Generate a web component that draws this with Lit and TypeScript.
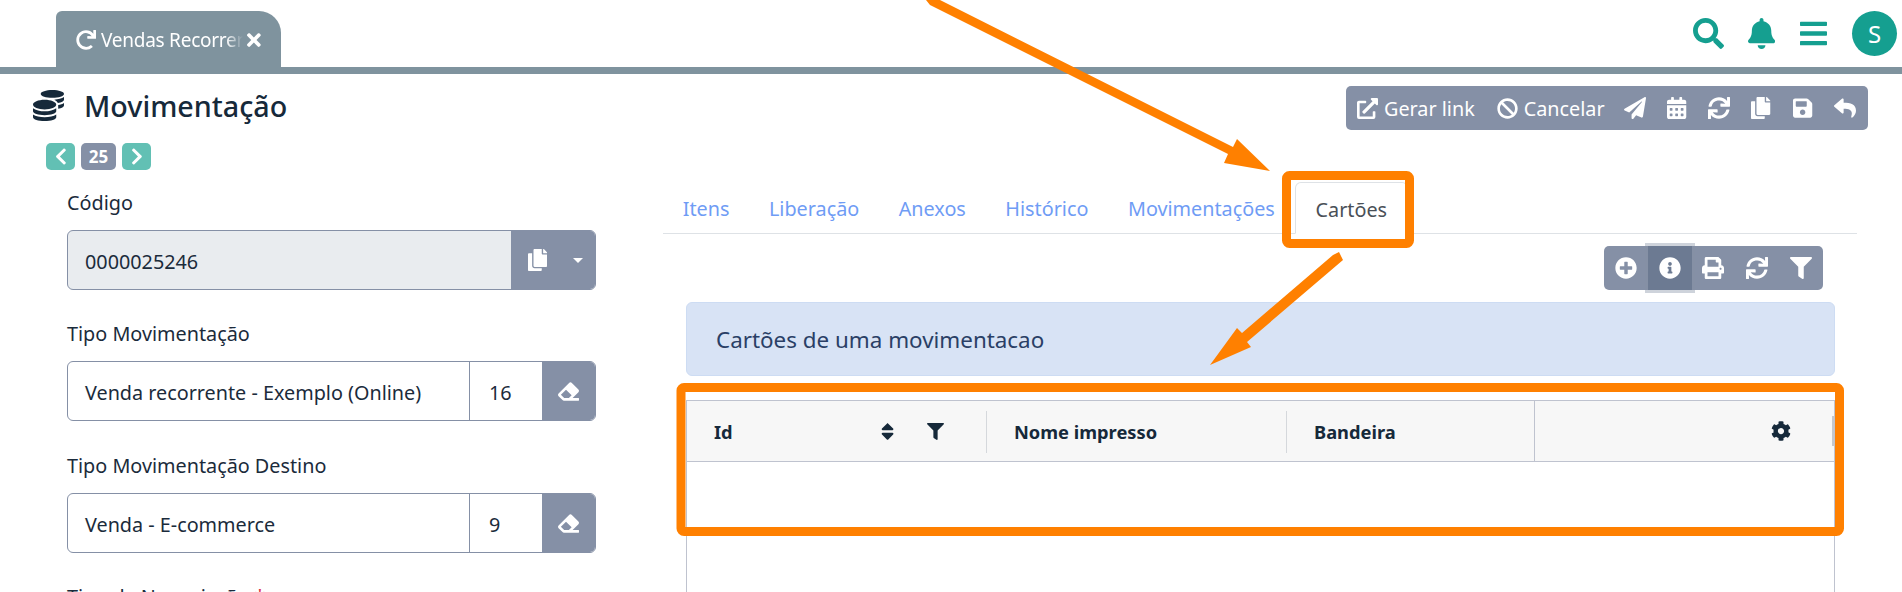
import { LitElement, html, css } from 'lit';
import { customElement } from 'lit/decorators.js';

// font awesome 5 solid paths, [viewBox width, d]
const ICONS: Record<string, [number, string]> = {
  search: [512, 'M505 442.7L405.3 343c-4.5-4.5-10.6-7-17-7H372c27.6-35.3 44-79.7 44-128C416 93.1 322.9 0 208 0S0 93.1 0 208s93.1 208 208 208c48.3 0 92.7-16.4 128-44v16.3c0 6.4 2.5 12.5 7 17l99.7 99.7c9.4 9.4 24.6 9.4 33.9 0l28.3-28.3c9.4-9.4 9.4-24.6.1-34zM208 336c-70.7 0-128-57.2-128-128 0-70.7 57.2-128 128-128 70.7 0 128 57.2 128 128 0 70.7-57.2 128-128 128z'],
  bell: [448, 'M224 512c35.32 0 63.97-28.65 63.97-64H160.03c0 35.35 28.65 64 63.97 64zm215.39-149.71c-19.32-20.76-55.47-51.99-55.47-154.29 0-77.7-54.48-139.9-127.94-155.16V32c0-17.67-14.32-32-31.98-32s-31.98 14.33-31.98 32v20.84C118.56 68.1 64.08 130.3 64.08 208c0 102.3-36.15 133.53-55.47 154.29-6 6.45-8.66 14.16-8.61 21.71.11 16.4 12.98 32 32.1 32h383.8c19.12 0 32-15.6 32.1-32 .05-7.55-2.61-15.27-8.61-21.71z'],
  bars: [448, 'M16 132h416c8.837 0 16-7.163 16-16V76c0-8.837-7.163-16-16-16H16C7.163 60 0 67.163 0 76v40c0 8.837 7.163 16 16 16zm0 160h416c8.837 0 16-7.163 16-16v-40c0-8.837-7.163-16-16-16H16c-8.837 0-16 7.163-16 16v40c0 8.837 7.163 16 16 16zm0 160h416c8.837 0 16-7.163 16-16v-40c0-8.837-7.163-16-16-16H16c-8.837 0-16 7.163-16 16v40c0 8.837 7.163 16 16 16z'],
  times: [352, 'M242.72 256l100.07-100.07c12.28-12.28 12.28-32.19 0-44.48l-22.24-22.24c-12.28-12.28-32.19-12.28-44.48 0L176 189.28 75.93 89.21c-12.28-12.28-32.19-12.28-44.48 0L9.21 111.45c-12.28 12.28-12.28 32.19 0 44.48L109.28 256 9.21 356.07c-12.28 12.28-12.28 32.19 0 44.48l22.24 22.24c12.28 12.28 32.2 12.28 44.48 0L176 322.72l100.07 100.07c12.28 12.28 32.2 12.28 44.48 0l22.24-22.24c12.28-12.28 12.28-32.19 0-44.48L242.72 256z'],
  redo: [512, 'M500.33 0h-47.41a12 12 0 0 0-12 12.57l4 82.76A247.42 247.42 0 0 0 256 8C119.34 8 7.9 119.53 8 256.19 8.1 393.07 119.1 504 256 504a247.1 247.1 0 0 0 166.18-63.91 12 12 0 0 0 .48-17.43l-34-34a12 12 0 0 0-16.38-.55A176 176 0 1 1 402.1 157.8l-101.53-4.87a12 12 0 0 0-12.57 12v47.41a12 12 0 0 0 12 12h200.33a12 12 0 0 0 12-12V12a12 12 0 0 0-12-12z'],
  sync: [512, 'M440.65 12.57l4 82.77A247.16 247.16 0 0 0 255.83 8C134.73 8 33.91 94.92 12.29 209.82A12 12 0 0 0 24.09 224h49.05a12 12 0 0 0 11.67-9.26 175.91 175.91 0 0 1 317-56.94l-101.46-4.86a12 12 0 0 0-12.57 12v47.41a12 12 0 0 0 12 12H500a12 12 0 0 0 12-12V12a12 12 0 0 0-12-12h-47.37a12 12 0 0 0-11.98 12.57zM255.83 432a175.61 175.61 0 0 1-146-77.8l101.8 4.87a12 12 0 0 0 12.57-12v-47.4a12 12 0 0 0-12-12H12a12 12 0 0 0-12 12V500a12 12 0 0 0 12 12h47.35a12 12 0 0 0 12-12.6l-4.15-82.57A247.17 247.17 0 0 0 255.83 504c121.11 0 221.93-86.92 243.55-201.82a12 12 0 0 0-11.8-14.18h-49.05a12 12 0 0 0-11.67 9.26A175.86 175.86 0 0 1 255.83 432z'],
  filter: [512, 'M487.976 0H24.028C2.71 0-8.047 25.866 7.058 40.971L192 225.941V432c0 7.831 3.821 15.17 10.237 19.662l80 55.98C298.02 518.69 320 507.493 320 487.98V225.941l184.947-184.97C520.021 25.896 509.338 0 487.976 0z'],
  plus: [512, 'M256 8C119 8 8 119 8 256s111 248 248 248 248-111 248-248S393 8 256 8zm144 276c0 6.6-5.4 12-12 12h-92v92c0 6.6-5.4 12-12 12h-56c-6.6 0-12-5.4-12-12v-92h-92c-6.6 0-12-5.4-12-12v-56c0-6.6 5.4-12 12-12h92v-92c0-6.6 5.4-12 12-12h56c6.6 0 12 5.4 12 12v92h92c6.6 0 12 5.4 12 12v56z'],
  info: [512, 'M256 8C119.043 8 8 119.083 8 256c0 136.997 111.043 248 248 248s248-111.003 248-248C504 119.083 392.957 8 256 8zm0 110c23.196 0 42 18.804 42 42s-18.804 42-42 42-42-18.804-42-42 18.804-42 42-42zm56 254c0 6.627-5.373 12-12 12h-88c-6.627 0-12-5.373-12-12v-24c0-6.627 5.373-12 12-12h12v-64h-12c-6.627 0-12-5.373-12-12v-24c0-6.627 5.373-12 12-12h64c6.627 0 12 5.373 12 12v100h12c6.627 0 12 5.373 12 12v24z'],
  print: [512, 'M448 192V77.25c0-8.49-3.37-16.62-9.37-22.63L393.37 9.37c-6-6-14.14-9.37-22.63-9.37H96C78.33 0 64 14.33 64 32v160c-35.35 0-64 28.65-64 64v112c0 8.84 7.16 16 16 16h48v96c0 17.67 14.33 32 32 32h320c17.67 0 32-14.33 32-32v-96h48c8.84 0 16-7.16 16-16V256c0-35.35-28.65-64-64-64zm-64 256H128v-96h256v96zm0-224H128V64h192v48c0 8.84 7.16 16 16 16h48v96zm48 72c-13.25 0-24-10.75-24-24 0-13.26 10.75-24 24-24s24 10.74 24 24c0 13.25-10.75 24-24 24z'],
  plane: [512, 'M476 3.2L12.5 270.6c-18.1 10.4-15.8 35.6 2.2 43.2L121 358.4l287.3-253.2c5.5-4.9 13.3 2.6 8.6 8.3L176 407v80.5c0 23.6 28.5 32.9 42.5 15.8L282 426l124.6 52.2c14.2 6 30.4-2.9 33-18.2l72-432C515 7.8 493.3-6.8 476 3.2z'],
  calendar: [448, 'M0 464c0 26.5 21.5 48 48 48h352c26.5 0 48-21.5 48-48V192H0v272zm320-196c0-6.6 5.4-12 12-12h40c6.6 0 12 5.4 12 12v40c0 6.6-5.4 12-12 12h-40c-6.6 0-12-5.4-12-12v-40zm0 128c0-6.6 5.4-12 12-12h40c6.6 0 12 5.4 12 12v40c0 6.6-5.4 12-12 12h-40c-6.6 0-12-5.4-12-12v-40zM192 268c0-6.6 5.4-12 12-12h40c6.6 0 12 5.4 12 12v40c0 6.6-5.4 12-12 12h-40c-6.6 0-12-5.4-12-12v-40zm0 128c0-6.6 5.4-12 12-12h40c6.6 0 12 5.4 12 12v40c0 6.6-5.4 12-12 12h-40c-6.6 0-12-5.4-12-12v-40zM64 268c0-6.6 5.4-12 12-12h40c6.6 0 12 5.4 12 12v40c0 6.6-5.4 12-12 12H76c-6.6 0-12-5.4-12-12v-40zm0 128c0-6.6 5.4-12 12-12h40c6.6 0 12 5.4 12 12v40c0 6.6-5.4 12-12 12H76c-6.6 0-12-5.4-12-12v-40zM400 64h-48V16c0-8.8-7.2-16-16-16h-32c-8.8 0-16 7.2-16 16v48H160V16c0-8.8-7.2-16-16-16h-32c-8.8 0-16 7.2-16 16v48H48C21.5 64 0 85.5 0 112v48h448v-48c0-26.5-21.5-48-48-48z'],
  copy: [448, 'M320 448v40c0 13.255-10.745 24-24 24H24c-13.255 0-24-10.745-24-24V120c0-13.255 10.745-24 24-24h72v296c0 30.879 25.121 56 56 56h168zm0-344V0H152c-13.255 0-24 10.745-24 24v368c0 13.255 10.745 24 24 24h272c13.255 0 24-10.745 24-24V128H344c-13.2 0-24-10.8-24-24zm120.971-31.029L375.029 7.029A24 24 0 0 0 358.059 0H352v96h96v-6.059a24 24 0 0 0-7.029-16.97z'],
  save: [448, 'M433.941 129.941l-83.882-83.882A48 48 0 0 0 316.118 32H48C21.49 32 0 53.49 0 80v352c0 26.51 21.49 48 48 48h352c26.51 0 48-21.49 48-48V163.882a48 48 0 0 0-14.059-33.941zM224 416c-35.346 0-64-28.654-64-64 0-35.346 28.654-64 64-64s64 28.654 64 64c0 35.346-28.654 64-64 64zm96-304.52V212c0 6.627-5.373 12-12 12H76c-6.627 0-12-5.373-12-12V108c0-6.627 5.373-12 12-12h228.52c3.183 0 6.235 1.264 8.485 3.515l3.48 3.48A11.996 11.996 0 0 1 320 111.48z'],
  reply: [512, 'M8.309 189.836L184.313 37.851C199.719 24.546 224 35.347 224 56.015v80.053c160.629 1.839 288 34.032 288 186.258 0 61.441-39.581 122.309-83.333 154.132-13.653 9.931-33.111-2.533-28.077-18.631 45.344-145.012-21.507-183.51-176.59-185.742V360c0 20.7-24.3 31.453-39.687 18.164l-176.004-152c-11.071-9.562-11.086-26.753 0-36.328z'],
  ban: [512, 'M256 8C119.034 8 8 119.033 8 256s111.034 248 248 248 248-111.034 248-248S392.967 8 256 8zm130.108 117.892c65.448 65.448 70 165.481 20.677 235.637L150.47 105.216c70.204-49.356 170.226-44.735 235.638 20.676zM125.892 386.108c-65.448-65.448-70-165.481-20.677-235.637L361.53 406.784c-70.203 49.356-170.226 44.736-235.638-20.676z'],
  link: [512, 'M432 320h-32a16 16 0 0 0-16 16v112H64V128h144a16 16 0 0 0 16-16V80a16 16 0 0 0-16-16H48a48 48 0 0 0-48 48v352a48 48 0 0 0 48 48h352a48 48 0 0 0 48-48V336a16 16 0 0 0-16-16zM488 0H360c-21.37 0-32.05 25.91-17 41l35.73 35.73L135 320.37a24 24 0 0 0 0 34L157.67 377a24 24 0 0 0 34 0l243.61-243.68L471 169c15 15 41 4.5 41-17V24a24 24 0 0 0-24-24z'],
  eraser: [512, 'M497.941 273.941c18.745-18.745 18.745-49.137 0-67.882l-160-160c-18.745-18.745-49.136-18.746-67.883 0l-256 256c-18.745 18.745-18.745 49.137 0 67.882l96 96A48.004 48.004 0 0 0 144 480h356c6.627 0 12-5.373 12-12v-40c0-6.627-5.373-12-12-12H355.883l142.058-142.059zm-302.627-62.627l137.372 137.372L265.373 416H150.628l-80-80 124.686-124.686z'],
  cog: [512, 'M487.4 315.7l-42.6-24.6c4.3-23.2 4.3-47 0-70.2l42.6-24.6c4.9-2.8 7.1-8.6 5.5-14-11.1-35.6-30-67.8-54.7-94.6-3.8-4.1-10-5.1-14.8-2.3L380.8 110c-17.9-15.4-38.5-27.3-60.8-35.1V25.8c0-5.6-3.9-10.5-9.4-11.7-36.7-8.2-74.3-7.8-109.2 0-5.5 1.2-9.4 6.1-9.4 11.7V75c-22.2 7.9-42.8 19.8-60.8 35.1L88.7 85.5c-4.9-2.8-11-1.9-14.8 2.3-24.7 26.7-43.6 58.9-54.7 94.6-1.7 5.4.6 11.2 5.5 14L67.3 221c-4.3 23.2-4.3 47 0 70.2l-42.6 24.6c-4.9 2.8-7.1 8.6-5.5 14 11.1 35.6 30 67.8 54.7 94.6 3.8 4.1 10 5.1 14.8 2.3l42.6-24.6c17.9 15.4 38.5 27.3 60.8 35.1v49.2c0 5.6 3.9 10.5 9.4 11.7 36.7 8.2 74.3 7.8 109.2 0 5.5-1.2 9.4-6.1 9.4-11.7v-49.2c22.2-7.9 42.8-19.8 60.8-35.1l42.6 24.6c4.9 2.8 11 1.9 14.8-2.3 24.7-26.7 43.6-58.9 54.7-94.6 1.5-5.5-.7-11.3-5.6-14.1zM256 336c-44.1 0-80-35.9-80-80s35.9-80 80-80 80 35.9 80 80-35.9 80-80 80z'],
  coins: [512, 'M0 405.3V448c0 35.3 86 64 192 64s192-28.7 192-64v-42.7C342.7 434.4 267.2 448 192 448S41.3 434.4 0 405.3zM320 128c106 0 192-28.7 192-64S426 0 320 0 128 28.7 128 64s86 64 192 64zM0 300.4V352c0 35.3 86 64 192 64s192-28.7 192-64v-51.6c-41.3 34-116.9 51.6-192 51.6S41.3 334.4 0 300.4zm416 11c57.3-11.1 96-31.7 96-55.4v-42.7c-23.2 16.4-57.3 27.6-96 34.5v63.6zM192 160C86 160 0 195.8 0 240s86 80 192 80 192-35.8 192-80-86-80-192-80zm219.3 56.3c60-10.8 100.7-32 100.7-56.3v-42.7c-35.5 25.1-96.5 38.6-160.7 41.8 29.5 14.3 51.2 33.5 60 57.2z'],
  left: [320, 'M34.52 239.03L228.87 44.69c9.37-9.37 24.57-9.37 33.94 0l22.67 22.67c9.36 9.36 9.37 24.52.04 33.9L131.49 256l154.02 154.75c9.34 9.38 9.32 24.54-.04 33.9l-22.67 22.67c-9.37 9.37-24.57 9.37-33.94 0L34.52 272.97c-9.37-9.37-9.37-24.57 0-33.94z'],
  right: [320, 'M285.476 272.971L91.132 467.314c-9.373 9.373-24.569 9.373-33.941 0l-22.667-22.667c-9.357-9.357-9.375-24.522-.04-33.901L188.505 256 34.484 101.255c-9.335-9.379-9.317-24.544.04-33.901l22.667-22.667c9.373-9.373 24.569-9.373 33.941 0L285.475 239.03c9.373 9.372 9.373 24.568.001 33.941z'],
  sort: [320, 'M41 288h238c21.4 0 32.1 25.9 17 41L177 448c-9.4 9.4-24.6 9.4-33.9 0L24 329c-15.1-15.1-4.4-41 17-41zm255-105L177 64c-9.4-9.4-24.6-9.4-33.9 0L24 183c-15.1 15.1-4.4 41 17 41h238c21.4 0 32.1-25.9 17-41z'],
};

const icon = (name: string, size: number) => {
  const [w, d] = ICONS[name];
  return html`<svg class="ic" style="height:${size}px;width:${(size * w) / 512}px" viewBox="0 0 ${w} 512" fill="currentColor"><path d=${d}></path></svg>`;
};

@customElement('app-root')
export class AppRoot extends LitElement {
  static styles = css`
    :host {
      display: block;
      position: relative;
      width: 1902px;
      height: 592px;
      overflow: hidden;
      background: #fff;
      font-family: 'Noto Sans', sans-serif;
      font-size: 19.8px;
      color: #1b2b3b;
    }
    .ic {
      display: block;
      flex: none;
    }
    .topbar {
      display: flex;
      justify-content: space-between;
      height: 67px;
      padding: 0 5px 0 56px;
      border-bottom: 7px solid #7f939e;
    }
    .doc-tab {
      display: flex;
      align-items: center;
      align-self: flex-end;
      width: 225px;
      height: 56px;
      padding: 2px 20px 0;
      box-sizing: border-box;
      background: #7f939e;
      color: #fff;
      border-radius: 6px 22px 0 0;
    }
    .doc-tab span {
      width: 142px;
      margin-left: 5px;
      overflow: hidden;
      white-space: nowrap;
      font-size: 19px;
      letter-spacing: -0.25px;
      -webkit-mask-image: linear-gradient(to right, #000 88%, transparent);
      mask-image: linear-gradient(to right, #000 88%, transparent);
    }
    .doc-tab .ic:last-child {
      margin-left: 4px;
    }
    .top-icons {
      display: flex;
      align-items: center;
      color: #159f90;
    }
    .bell {
      margin-left: 24px;
    }
    .bars,
    .avatar {
      margin-left: 25px;
    }
    .avatar {
      width: 45px;
      height: 45px;
      border-radius: 50%;
      background: #159f90;
      color: #fff;
      display: flex;
      align-items: center;
      justify-content: center;
      font-size: 24px;
    }
    .head {
      display: flex;
      justify-content: space-between;
      align-items: center;
      margin-top: 12px;
      padding: 0 34px 0 33px;
    }
    .title {
      display: flex;
      align-items: center;
      gap: 20px;
      margin: -5px 0 0;
      font-size: 28.7px;
      font-weight: 500;
      line-height: 36px;
      color: #16293a;
    }
    .toolbar {
      display: flex;
      align-items: center;
      background: #8590a6;
      color: #fff;
      border-radius: 5px;
    }
    .toolbar.main {
      width: 522px;
      height: 44px;
      padding: 0 2px 0 11px;
      box-sizing: border-box;
    }
    .toolbar.main b {
      font-weight: 400;
      margin-left: 6px;
      white-space: nowrap;
    }
    .toolbar.main b + .ic {
      margin-left: 22px;
    }
    .slots {
      display: flex;
      flex: none;
      margin-left: auto;
    }
    .slots div {
      display: flex;
      justify-content: center;
      width: 42px;
    }
    .pager {
      display: flex;
      align-items: center;
      gap: 6px;
      height: 28px;
      margin: 12px 0 0 46px;
    }
    .pager button {
      display: flex;
      align-items: center;
      justify-content: center;
      width: 29px;
      height: 27px;
      margin-top: 1px;
      padding: 0;
      border: 0;
      border-radius: 5px;
      background: #62c0b4;
      color: #fff;
    }
    .pager span {
      width: 35px;
      height: 27px;
      border-radius: 5px;
      background: #8590a6;
      color: #fff;
      font-size: 17px;
      font-weight: 700;
      line-height: 27px;
      text-align: center;
    }
    .body {
      display: flex;
      align-items: flex-start;
    }
    .form {
      width: 529px;
      margin-left: 67px;
      padding-top: 20px;
      flex: none;
    }
    .group {
      margin-bottom: 31px;
    }
    .group:nth-child(2) {
      margin-bottom: 32px;
    }
    label {
      display: block;
      line-height: 26px;
      margin-bottom: 14px;
    }
    label i {
      color: #dc3545;
      font-style: normal;
    }
    .field {
      display: flex;
      height: 60px;
      box-sizing: border-box;
      border: 1px solid #8590a6;
      border-radius: 6px;
      overflow: hidden;
      line-height: 61px;
    }
    .field.off {
      background: #e9ecef;
    }
    .val {
      flex: 1;
      padding-left: 17px;
      white-space: nowrap;
    }
    .num {
      width: 73px;
      padding-left: 19px;
      box-sizing: border-box;
      border-left: 1px solid #8590a6;
    }
    .btn {
      display: flex;
      align-items: center;
      justify-content: center;
      width: 53px;
      background: #8590a6;
      color: #fff;
    }
    .btn.copy {
      width: 84px;
      justify-content: flex-start;
      padding-left: 17px;
      box-sizing: border-box;
    }
    .caret {
      width: 0;
      height: 0;
      margin-left: 26px;
      border: 5px solid transparent;
      border-top-color: #fff;
      border-bottom-width: 0;
    }
    .detail {
      width: 1194px;
      margin: 12px 0 0 67px;
      flex: none;
    }
    .tabs {
      display: flex;
      height: 52px;
      box-sizing: border-box;
      border-bottom: 1px solid #dee2e6;
    }
    .tabs a {
      padding: 0 19.75px;
      line-height: 54px;
      color: #6f9cf5;
      white-space: nowrap;
    }
    .tabs a.on {
      padding: 0 20px;
      height: 52px;
      box-sizing: border-box;
      border: 1px solid #dee2e6;
      border-bottom-color: #fff;
      border-radius: 6px 6px 0 0;
      color: #495057;
    }
    .toolbar.sub {
      width: 219px;
      height: 44px;
      margin: 12px 34px 0 auto;
    }
    .toolbar.sub div {
      display: flex;
      align-items: center;
      justify-content: center;
      width: 43.8px;
      height: 44px;
    }
    .toolbar.sub div.on {
      background: #6c7a92;
      box-shadow: 0 0 0 3px rgba(133, 144, 166, 0.4);
    }
    .alert {
      display: flex;
      align-items: center;
      height: 74px;
      margin: 12px 22px 0 23px;
      padding: 1px 0 0 29px;
      box-sizing: border-box;
      border: 1px solid #cddcf3;
      border-radius: 6px;
      background: #d8e3f5;
      color: #2a3f66;
      font-size: 22.4px;
    }
    .table {
      height: 300px;
      margin: 24px 22px 0 23px;
      border: 1px solid #bfc3cf;
      border-bottom: 0;
    }
    .thead {
      display: grid;
      grid-template-columns: 300px 300px 248px 1fr;
      height: 60px;
      border-bottom: 1px solid #bfc3cf;
      background: #f7f7f7;
      font-weight: 700;
      font-size: 18.3px;
    }
    .th {
      display: flex;
      align-items: center;
      position: relative;
      padding-left: 27px;
      color: #16293a;
    }
    .th.sep::after {
      content: '';
      position: absolute;
      right: 0;
      top: 10px;
      bottom: 8px;
      width: 1px;
      background: #d5d8dc;
    }
    .th.full {
      border-right: 1px solid #bfc3cf;
    }
    .th.last {
      justify-content: flex-end;
      padding-left: 0;
    }
    .sort {
      margin-left: 148px;
    }
    .funnel {
      margin-left: 33px;
    }
    .handle {
      width: 2px;
      height: 30px;
      margin-left: 41px;
      background: #c4c7cd;
    }
    .overlay {
      position: absolute;
      left: 0;
      top: 0;
      pointer-events: none;
    }
  `;

  render() {
    return html`
      <div class="topbar">
        <div class="doc-tab">
          ${icon('redo', 20)}<span>Vendas Recorrentes</span>${icon('times', 20)}
        </div>
        <div class="top-icons">
          ${icon('search', 31)}
          <div class="bell">${icon('bell', 31)}</div>
          <div class="bars">${icon('bars', 31)}</div>
          <div class="avatar">S</div>
        </div>
      </div>
      <div class="head">
        <h1 class="title">${icon('coins', 31)}Movimentação</h1>
        <div class="toolbar main">
          ${icon('link', 21)}<b>Gerar link</b>
          ${icon('ban', 21)}<b>Cancelar</b>
          <div class="slots">
            <div>${icon('plane', 22)}</div>
            <div>${icon('calendar', 22)}</div>
            <div>${icon('sync', 22)}</div>
            <div>${icon('copy', 22)}</div>
            <div>${icon('save', 22)}</div>
            <div>${icon('reply', 22)}</div>
          </div>
        </div>
      </div>
      <div class="pager">
        <button>${icon('left', 19)}</button><span>25</span><button>${icon('right', 19)}</button>
      </div>
      <div class="body">
        <div class="form">
          <div class="group">
            <label>Código</label>
            <div class="field off">
              <div class="val">0000025246</div>
              <div class="btn copy">${icon('copy', 22)}<div class="caret"></div></div>
            </div>
          </div>
          <div class="group">
            <label>Tipo Movimentação</label>
            <div class="field">
              <div class="val">Venda recorrente - Exemplo (Online)</div>
              <div class="num">16</div>
              <div class="btn">${icon('eraser', 21)}</div>
            </div>
          </div>
          <div class="group">
            <label>Tipo Movimentação Destino</label>
            <div class="field">
              <div class="val">Venda - E-commerce</div>
              <div class="num">9</div>
              <div class="btn">${icon('eraser', 21)}</div>
            </div>
          </div>
          <div class="group">
            <label>Tipo de Negociação <i>*</i></label>
          </div>
        </div>
        <div class="detail">
          <div class="tabs">
            <a>Itens</a><a>Liberação</a><a>Anexos</a><a>Histórico</a><a>Movimentações</a><a class="on">Cartões</a>
          </div>
          <div class="toolbar sub">
            <div>${icon('plus', 22)}</div>
            <div class="on">${icon('info', 22)}</div>
            <div>${icon('print', 22)}</div>
            <div>${icon('sync', 22)}</div>
            <div>${icon('filter', 22)}</div>
          </div>
          <div class="alert">Cartões de uma movimentacao</div>
          <div class="table">
            <div class="thead">
              <div class="th sep">
                <span>Id</span>
                <div class="sort">${icon('sort', 21)}</div>
                <div class="funnel">${icon('filter', 17)}</div>
              </div>
              <div class="th sep">Nome impresso</div>
              <div class="th full">Bandeira</div>
              <div class="th last">${icon('cog', 20)}<div class="handle"></div></div>
            </div>
          </div>
        </div>
      </div>
      <svg class="overlay" width="1902" height="592" viewBox="0 0 1902 592">
        <rect x="1286.5" y="175.5" width="123" height="68" rx="3" fill="none" stroke="#ff8000" stroke-width="9"></rect>
        <rect x="681" y="387.5" width="1158.5" height="144" rx="3" fill="none" stroke="#ff8000" stroke-width="9"></rect>
        <polygon fill="#ff8000" points="940,0 1233,147 1237,139 1270,171 1224,163 1228,154 930,5 926,0"></polygon>
        <polygon fill="#ff8000" points="1333,255 1339,252 1343,260 1247,342 1251,347 1210,365 1237,328 1242,333"></polygon>
      </svg>
    `;
  }
}

declare global {
  interface HTMLElementTagNameMap {
    'app-root': AppRoot;
  }
}
